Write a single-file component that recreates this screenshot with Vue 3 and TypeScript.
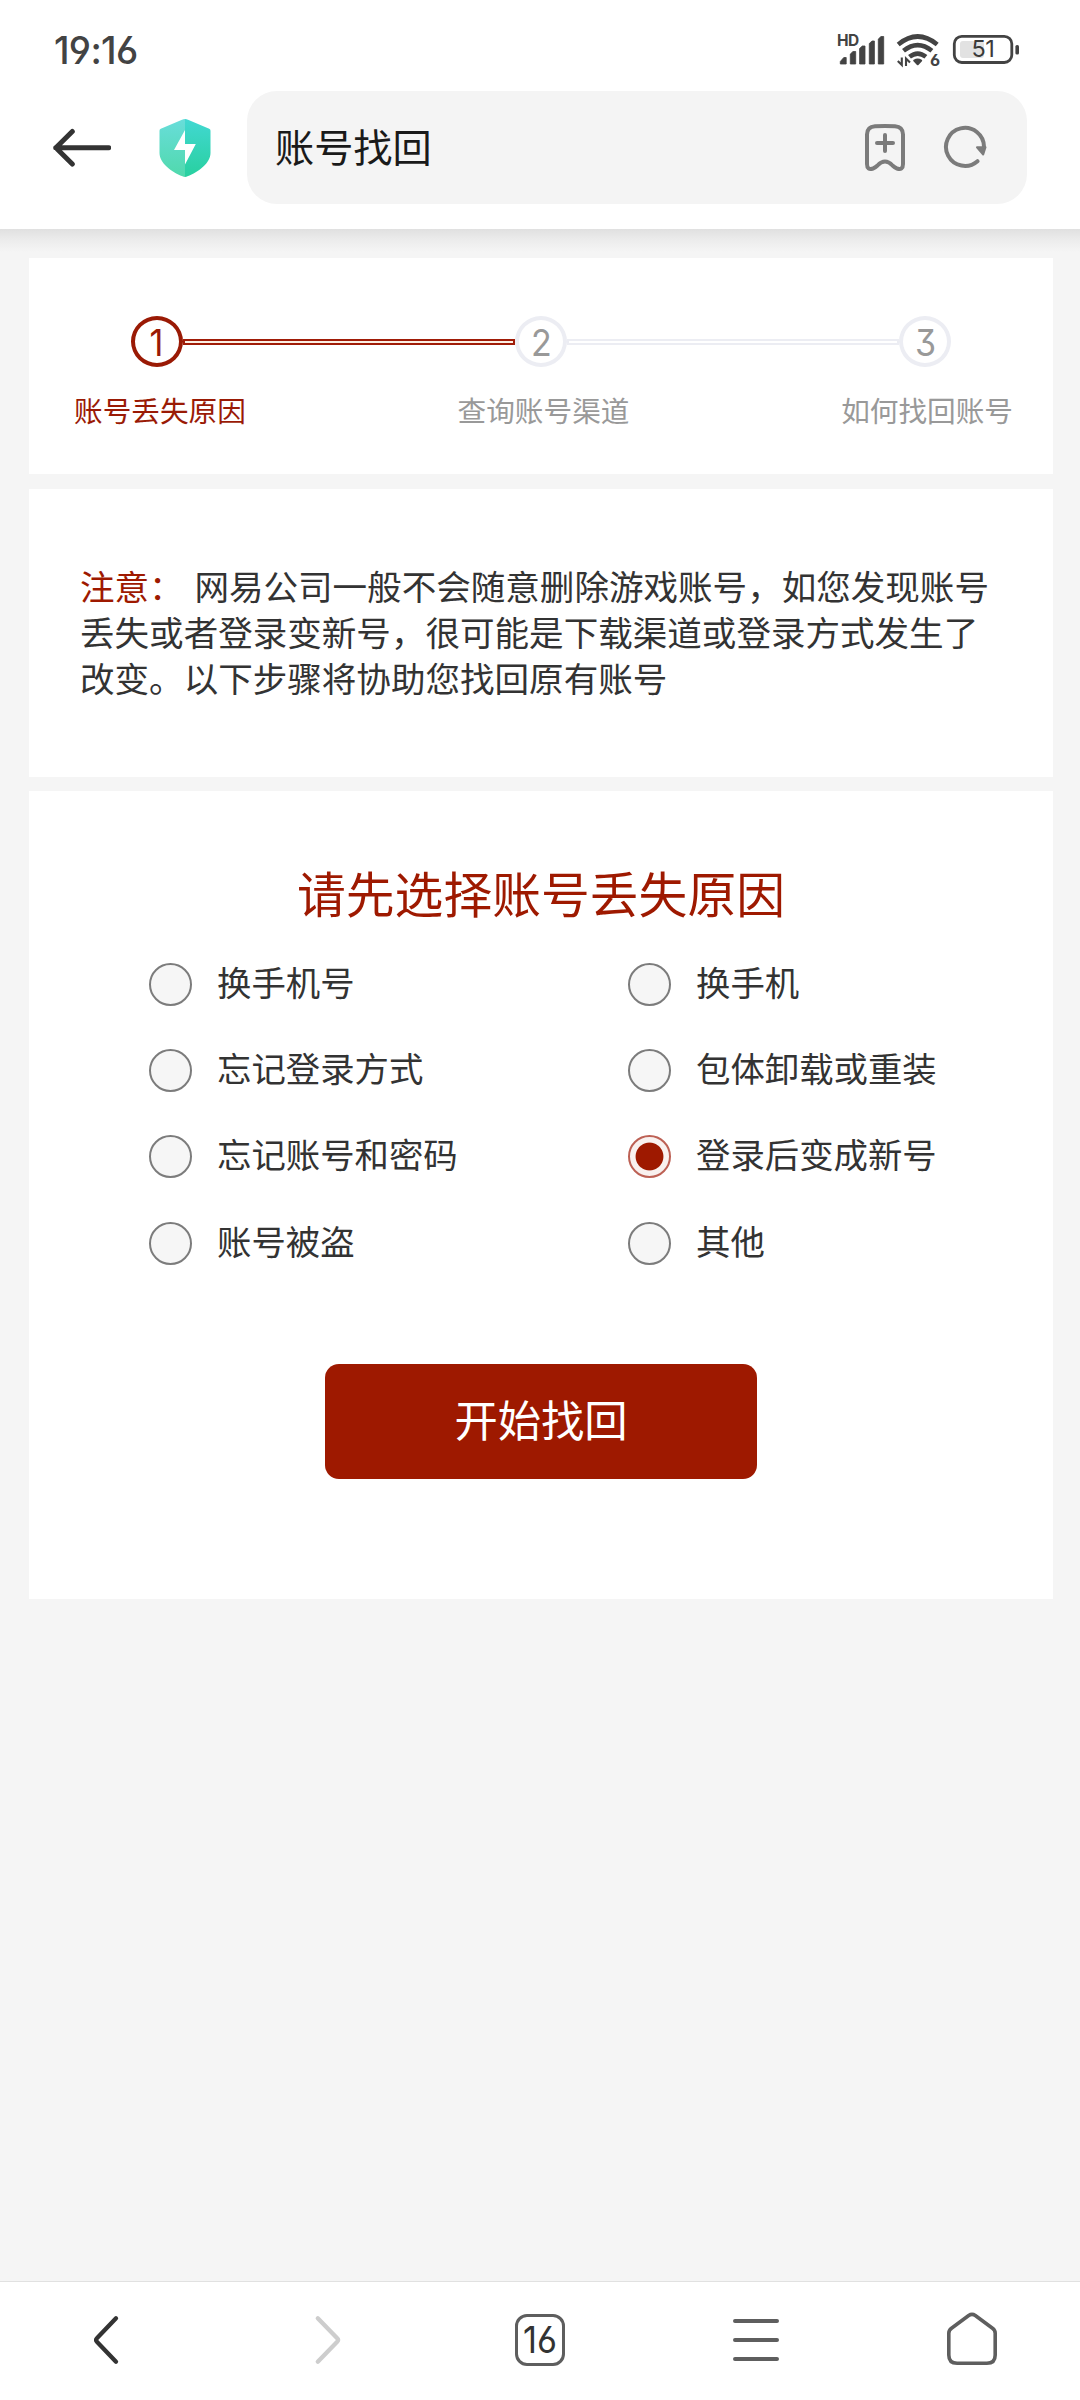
<script setup lang="ts">
import { ref } from 'vue'

interface Step {
  no: number
  label: string
}

const steps: Step[] = [
  { no: 1, label: '账号丢失原因' },
  { no: 2, label: '查询账号渠道' },
  { no: 3, label: '如何找回账号' },
]
const current = ref(1)

const reasons: string[] = [
  '换手机号',
  '换手机',
  '忘记登录方式',
  '包体卸载或重装',
  '忘记账号和密码',
  '登录后变成新号',
  '账号被盗',
  '其他',
]
const reason = ref('登录后变成新号')
</script>

<template>
  <div class="screen">
    <header class="top">
      <div class="status">
        <span class="time">19:16</span>
        <svg class="indicators" width="184" height="52" viewBox="0 0 184 52">
          <g fill="#434343">
            <text x="1" y="18" font-size="15.500" font-weight="700" letter-spacing="-.5">HD</text>
            <path d="M4.300 36v-2.500l3.500-4h2.400v6.500zM14.300 36V26l2.700-2.500h2.700V36zM23.600 36V20.500l2.700-2.500H29V36zM33.300 36V15.500L36 13h2.400v23zM42.300 36V11L45 8.500h2.700V36z" stroke="#434343" stroke-width=".8" stroke-linejoin="round" />
            <path d="M78.200 32.500q3.500-2 7 0l-3.500 3.800z" stroke="#434343" stroke-width="2" stroke-linejoin="round" />
            <text x="94" y="38.300" font-size="16.500" font-weight="700">6</text>
          </g>
          <g fill="none" stroke="#434343">
            <path d="M62.200 16.500q19.500-16 39 0M67.500 22.800q14.200-11.500 28.400 0M73.500 28.800q8.200-6.500 16.400 0" stroke-width="4.600" />
            <path d="M65.800 29.500v7.500l-4-4M70 38v-7.500l4 4" stroke-width="2.100" />
            <rect x="118.300" y="8.300" width="57.500" height="26.200" rx="7.500" stroke-width="2.800" />
          </g>
          <rect x="124" y="13" width="24" height="17" rx="3" fill="#e2e2e2" />
          <rect x="179.400" y="17" width="3.600" height="9.500" rx="1.600" fill="#434343" />
          <text x="147" y="29.400" font-size="23.500" font-weight="400" text-anchor="middle" letter-spacing="-.3" fill="#3a3a3a">51</text>
        </svg>
      </div>
      <div class="toolbar">
        <svg class="back" width="60" height="42" viewBox="0 0 60 42" fill="none" stroke="#333" stroke-width="5" stroke-linecap="round" stroke-linejoin="round">
          <path d="M4.700 20.800h53M21.300 4.500 4.900 20.800 21.300 37" />
        </svg>
        <svg class="shield" width="52" height="60" viewBox="0 0 52 60">
          <defs>
            <linearGradient id="shieldLeft" x1="0" y1="0" x2="0" y2="1">
              <stop offset="0" stop-color="#68ddda" />
              <stop offset="1" stop-color="#50d9ac" />
            </linearGradient>
            <linearGradient id="shieldRight" x1="0" y1="0" x2="0" y2="1">
              <stop offset="0" stop-color="#42d8d2" />
              <stop offset="1" stop-color="#28d09f" />
            </linearGradient>
          </defs>
          <path d="M26 1q-1.500 0-3 .7L1.800 10.700Q.5 11.300.500 12.800V35c0 10 12 19 23 23.300q1.200.7 2.500.7z" fill="url(#shieldLeft)" />
          <path d="M26 1q1.500 0 3 .7l21.200 9q1.300.6 1.300 2.100V35c0 10-12 19-23 23.300q-1.200.7-2.500.7z" fill="url(#shieldRight)" />
          <path d="M26 12 15 32h11v14.500L36.800 26H26z" fill="#fff" />
        </svg>
        <div class="address">
          <span>账号找回</span>
          <div class="actions">
            <svg width="44" height="50" viewBox="0 0 44 50" fill="none" stroke="#7b7b7b" stroke-width="4" stroke-linecap="round" stroke-linejoin="round">
              <path d="M12 4.200Q22 3.800 32 4.200 40 4.800 40 12.500V42q0 6.500-6 4.500-2.200-.8-4.500-3Q22 35.500 14.500 43.500q-2.300 2.200-4.500 3Q4 48.500 4 42V12.500Q4 4.800 12 4.200z" />
              <path d="M14 21h16M22 13v16" />
            </svg>
            <svg width="46" height="46" viewBox="0 0 46 46" fill="none" stroke="#7b7b7b" stroke-width="4" stroke-linecap="round">
              <path d="M35.500 37.200A19 19 0 1 1 42 23" />
              <path d="M35 23.300h8.500L41.200 30.500z" fill="#7b7b7b" stroke-width="2" stroke-linejoin="round" />
            </svg>
          </div>
        </div>
      </div>
    </header>

    <main class="page">
      <section class="card steps">
        <div class="track">
          <template v-for="step in steps" :key="step.no">
            <div v-if="step.no > 1" class="line" :class="{ active: step.no - 1 <= current }"></div>
            <div class="dot" :class="{ active: step.no === current }"><span>{{ step.no }}</span></div>
          </template>
        </div>
        <div class="labels">
          <span v-for="step in steps" :key="step.no" :class="{ active: step.no === current }">{{ step.label }}</span>
        </div>
      </section>

      <section class="card notice">
        <p><em>注意：</em> 网易公司一般不会随意删除游戏账号，如您发现账号<br>丢失或者登录变新号，很可能是下载渠道或登录方式发生了<br>改变。以下步骤将协助您找回原有账号</p>
      </section>

      <section class="card chooser">
        <h1>请先选择账号丢失原因</h1>
        <div class="options">
          <label v-for="item in reasons" :key="item">
            <input v-model="reason" type="radio" name="reason" :value="item">
            <span>{{ item }}</span>
          </label>
        </div>
        <button type="button">开始找回</button>
      </section>
    </main>

    <nav class="bottom">
      <div>
        <svg width="60" height="60" viewBox="0 0 60 60" fill="none" stroke="#333" stroke-width="4.300" stroke-linecap="round" stroke-linejoin="round">
          <path d="M38 8.300 18.900 28.300q-1.700 1.700 0 3.400L38 51.700" />
        </svg>
      </div>
      <div>
        <svg width="60" height="60" viewBox="0 0 60 60" fill="none" stroke="#cdcdcd" stroke-width="4.300" stroke-linecap="round" stroke-linejoin="round">
          <path d="M23.800 8.300 43.200 28.300q1.700 1.700 0 3.400L23.800 51.700" />
        </svg>
      </div>
      <div><span class="tabs"><span>16</span></span></div>
      <div>
        <svg width="60" height="60" viewBox="0 0 60 60" fill="none" stroke="#5e5e5e" stroke-width="4" stroke-linecap="round">
          <path d="M9 11h42M9 30h42M9 49h42" />
        </svg>
      </div>
      <div>
        <svg width="60" height="60" viewBox="0 0 60 60" fill="none" stroke="#5e5e5e" stroke-width="3.600" stroke-linejoin="round">
          <path d="M26.700 5.500q3.300-2.200 6.600 0L50.500 18.200q2.700 2 2.700 5V45q0 8.300-8.300 8.300H15.100Q6.800 53.300 6.800 45V23.200q0-3 2.700-5z" />
        </svg>
      </div>
    </nav>
  </div>
</template>

<style>
body {
  margin: 0;
}
</style>

<style scoped>
.screen {
  display: flex;
  flex-direction: column;
  box-sizing: border-box;
  width: 1080px;
  height: 2400px;
  overflow: hidden;
  background: #f5f5f5;
  color: #333;
  font-family: Inter, "Noto Sans CJK SC", sans-serif;
  font-feature-settings: "cv03", "cv04", "cv09";
}
.screen * {
  box-sizing: border-box;
}
svg {
  display: block;
  flex: none;
}
.top {
  flex: none;
  height: 229px;
  background: #fff;
}
.status {
  display: flex;
  justify-content: space-between;
  height: 91px;
  padding: 28px 60px 0 54px;
}
.time {
  margin-top: 1px;
  font-size: 37.5px;
  line-height: 44px;
  font-weight: 500;
  letter-spacing: -0.7px;
  color: #434343;
}
.toolbar {
  display: flex;
  align-items: center;
  height: 113px;
  padding: 0 53px 0 51px;
}
.shield {
  margin-left: 47.5px;
}
.address {
  display: flex;
  flex: 1;
  align-items: center;
  justify-content: space-between;
  height: 113px;
  margin-left: 36.5px;
  padding: 0 39.5px 0 28px;
  border-radius: 30px;
  background: #f4f4f4;
  font-family: "Noto Sans CJK SC", sans-serif;
  font-size: 39.2px;
  line-height: 56px;
  color: #1a1a1a;
}
.address > span {
  margin-top: -5px;
}
.actions {
  display: flex;
  align-items: center;
  gap: 34.5px;
  margin-top: -2px;
}
.page {
  flex: 1;
  padding: 29px 27px 0 29px;
  background: linear-gradient(#e0e0e0, #ebebeb 10px, #f5f5f5 23px);
  font-family: "Noto Sans CJK SC", sans-serif;
}
.card {
  background: #fff;
}
.steps {
  height: 216px;
  padding-top: 58px;
}
.track {
  display: flex;
  align-items: center;
  padding: 0 102px;
}
.dot {
  display: flex;
  align-items: center;
  justify-content: center;
  width: 52px;
  height: 51px;
  border: 4px solid #ecedf3;
  border-radius: 50%;
  font-family: Inter, sans-serif;
  font-size: 37px;
  line-height: 44px;
  color: #999;
}
.dot span {
  margin-top: 2px;
  transform: scaleX(0.92);
}
.line {
  flex: 1;
  height: 6px;
  border: 2px solid #ecedf3;
}
.line.active {
  border-color: #a01c08;
  background: #fdf0e4;
}
.labels {
  display: flex;
  justify-content: space-between;
  margin-top: 22.5px;
  padding: 0 40px 0 45px;
  font-size: 28.65px;
  line-height: 40px;
  color: #999;
}
.dot.active {
  border-color: #9a1a05;
  color: #9a1a05;
}
.labels .active {
  color: #9a1a05;
}
.notice {
  height: 288px;
  margin-top: 15px;
  padding: 73px 0 0 51px;
}
.notice p {
  margin: 0;
  font-size: 34.55px;
  line-height: 46px;
  white-space: nowrap;
}
.notice em {
  margin-right: 3px;
  font-style: normal;
  color: #9e1900;
}
.chooser {
  height: 808px;
  margin-top: 14px;
  padding-top: 67px;
}
h1 {
  margin: 0;
  text-align: center;
  font-size: 48.8px;
  line-height: 68px;
  font-weight: 400;
  color: #9e1900;
}
.options {
  display: grid;
  grid-template-columns: 479px 1fr;
  grid-auto-rows: 86.4px;
  margin-top: 15px;
  padding-left: 120px;
}
.options label {
  display: flex;
  align-items: center;
  font-size: 34.4px;
  line-height: 46px;
}
.options span {
  margin: -7px 0 0 25px;
}
input {
  appearance: none;
  flex: none;
  width: 43px;
  height: 43px;
  margin: 0;
  border: 2px solid #7c7c7c;
  border-radius: 50%;
  background: #f6f6f6;
}
input:checked {
  border-color: #bd6155;
  background: radial-gradient(circle, #9e1900 13.4px, #f9f1ef 14.4px);
}
button {
  display: block;
  width: 432px;
  height: 115px;
  margin: 77px 0 0 296px;
  padding: 0 0 7px;
  border: 0;
  border-radius: 14px;
  background: #9e1900;
  color: #fff;
  font-family: inherit;
  font-size: 43.3px;
}
.bottom {
  display: grid;
  flex: none;
  grid-template-columns: repeat(5, 1fr);
  height: 119px;
  padding-bottom: 2px;
  border-top: 1px solid #e1e1e1;
  background: #fff;
}
.bottom > div {
  display: flex;
  align-items: center;
  justify-content: center;
}
.tabs {
  display: flex;
  align-items: center;
  justify-content: center;
  width: 50px;
  height: 52px;
  border: 3.5px solid #5e5e5e;
  border-radius: 12px;
  font-size: 36.5px;
  line-height: 44px;
}
.tabs span {
  transform: scaleX(0.94);
}
</style>
